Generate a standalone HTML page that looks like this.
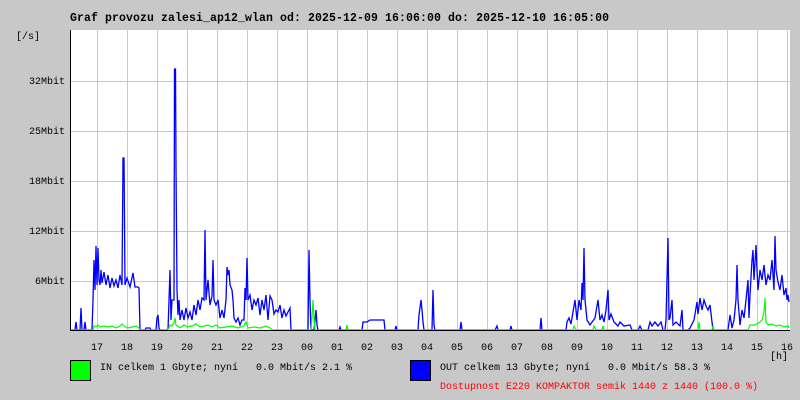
<!DOCTYPE html>
<html><head><meta charset="utf-8"><style>
body{margin:0;width:800px;height:400px;background:#c8c8c8;overflow:hidden;position:relative;font-family:"Liberation Mono",monospace;font-size:10px;color:#000}
.t{position:absolute;white-space:pre;line-height:12px}
.b{font-weight:bold;font-size:11.5px;letter-spacing:0.1px}
.y{position:absolute;right:735px;white-space:pre;line-height:12px}
.h{position:absolute;top:343px;width:30px;margin-left:-15px;text-align:center;line-height:12px}
</style></head><body>
<div class="t b" style="left:70px;top:13px">Graf provozu zalesi_ap12_wlan od: 2025-12-09 16:06:00 do: 2025-12-10 16:05:00</div>
<div class="t" style="left:16px;top:32px">[/s]</div>
<div class="y" style="top:77px">32Mbit</div>
<div class="y" style="top:127px">25Mbit</div>
<div class="y" style="top:177px">18Mbit</div>
<div class="y" style="top:227px">12Mbit</div>
<div class="y" style="top:277px">6Mbit</div>
<svg style="position:absolute;left:0;top:0" width="800" height="400">
<rect x="70" y="30" width="720" height="300" fill="#fff"/>
<g stroke="#c8c8c8" stroke-width="1">
<path d="M97.5 30V330M127.5 30V330M157.5 30V330M187.5 30V330M217.5 30V330M247.5 30V330M277.5 30V330M307.5 30V330M337.5 30V330M367.5 30V330M397.5 30V330M427.5 30V330M457.5 30V330M487.5 30V330M517.5 30V330M547.5 30V330M577.5 30V330M607.5 30V330M637.5 30V330M667.5 30V330M697.5 30V330M727.5 30V330M757.5 30V330M787.5 30V330"/>
<path d="M70 81.5H790M70 131.5H790M70 181.5H790M70 231.5H790M70 281.5H790"/>
</g>
<polyline fill="none" stroke="#00f" stroke-width="1.3" points="71,330 75,330 76,322 77,330 80,330 81,308 82,330 84,330 85,322 86,330 92,330 93,300 94,260 95,290 96,246 97,285 98,248 99,280 100,285 101,270 102,283 104,272 106,285 108,275 110,288 112,278 114,286 116,280 118,288 120,275 122,285 123,158 124,158 125,285 127,278 130,287 133,273 135,287 138,287 139,288 140,330 145,330 146,328 150,328 151,330 156,330 157,318 158,315 159,328 160,330 168,330 169,300 170,270 171,320 172,300 174,300 174.5,69 175.5,69 176,168 177,290 178,315 179,300 180,320 182,310 184,320 186,308 188,318 190,312 192,320 194,305 196,315 198,300 200,310 202,298 204,300 205,230 206,300 208,280 210,305 212,296 213,260 214,300 216,305 218,300 220,318 222,310 224,318 226,300 227,267 228,275 229,270 230,285 232,290 233,300 234,318 236,322 238,318 240,325 242,320 244,320 245,288 246,300 247,258 248,300 250,295 252,310 254,300 256,305 258,298 260,315 262,300 264,310 266,295 268,320 270,296 272,300 274,314 276,310 278,312 280,305 282,318 284,310 286,316 288,312 290,308 291,330 300,330 308,330 309,250 310,300 311,330 314,330 315,320 316,310 317,325 318,330 330,330 339,330 340,327 341,330 362,330 363,322 367,322 370,320 380,320 384,320 385,330 395,330 396,326 397,330 418,330 419,315 421,300 422,310 423,322 424,330 432,330 433,290 434,325 435,330 460,330 461,322 462,330 495,330 497,326 498,330 510,330 511,326 512,330 540,330 541,318 542,330 566,330 567,322 569,318 571,324 573,312 575,300 577,320 579,300 581,310 582,283 583,300 584,248 585,300 587,320 590,325 595,318 598,300 600,320 602,315 604,322 606,310 608,290 609,320 611,314 614,322 616,324 618,326 620,322 624,326 630,325 632,330 638,330 640,326 642,330 648,330 650,322 652,326 655,322 658,326 661,322 663,330 665,330 666,320 668,238 669,320 670,318 672,300 673,325 676,322 680,326 682,310 683,330 688,330 690,328 694,320 697,302 698,314 700,298 702,310 704,300 706,306 708,310 710,305 712,322 713,330 720,330 728,330 730,315 732,328 734,320 736,300 737,265 738,300 740,325 742,310 744,318 746,300 748,280 749,318 750,295 752,260 753,250 754,280 756,245 757,270 758,290 760,270 762,280 764,265 766,285 768,275 770,280 772,260 774,290 775,236 776,270 778,282 780,290 782,275 784,295 786,288 787,300 788,295 789,302"/>
<polyline fill="none" stroke="#0f0" stroke-width="1.2" points="71,330 93,330 94,326 96,327 98,325 100,327 104,326 108,327 112,326 116,328 120,326 122,324 124,326 128,328 132,327 136,326 139,328 140,330 168,330 170,325 172,326 174,323 175,318 176,325 178,326 180,328 184,325 188,327 192,326 196,324 200,327 204,326 208,325 212,327 216,325 220,328 226,327 232,326 238,328 244,326 246,322 248,328 254,327 260,328 266,326 270,328 272,330 311,330 312,318 313,300 314,318 315,330 346,330 347,325 348,330 573,330 574,326 576,330 593,330 594,326 596,330 602,330 603,326 604,330 698,330 699,322 700,330 712,330 713,326 714,330 748,330 750,325 755,325 760,322 762,320 764,312 765,298 766,322 768,325 772,324 776,326 780,325 784,327 788,326 789,328"/>
<path d="M70.5 30V331" stroke="#000" stroke-width="1"/>
<path d="M70 330.5H790" stroke="#000" stroke-width="1"/>
<rect x="70.5" y="360.5" width="20" height="20" fill="#0f0" stroke="#000"/>
<rect x="410.5" y="360.5" width="20" height="20" fill="#00f" stroke="#000"/>
</svg>
<div class="h" style="left:97px">17</div><div class="h" style="left:127px">18</div><div class="h" style="left:157px">19</div><div class="h" style="left:187px">20</div><div class="h" style="left:217px">21</div><div class="h" style="left:247px">22</div><div class="h" style="left:277px">23</div><div class="h" style="left:307px">00</div><div class="h" style="left:337px">01</div><div class="h" style="left:367px">02</div><div class="h" style="left:397px">03</div><div class="h" style="left:427px">04</div><div class="h" style="left:457px">05</div><div class="h" style="left:487px">06</div><div class="h" style="left:517px">07</div><div class="h" style="left:547px">08</div><div class="h" style="left:577px">09</div><div class="h" style="left:607px">10</div><div class="h" style="left:637px">11</div><div class="h" style="left:667px">12</div><div class="h" style="left:697px">13</div><div class="h" style="left:727px">14</div><div class="h" style="left:757px">15</div><div class="h" style="left:787px">16</div>
<div class="t" style="left:770px;top:352px">[h]</div>
<div class="t" style="left:100px;top:363px">IN celkem 1 Gbyte; nyní   0.0 Mbit/s 2.1 %</div>
<div class="t" style="left:440px;top:363px">OUT celkem 13 Gbyte; nyní   0.0 Mbit/s 58.3 %</div>
<div class="t" style="left:440px;top:382px;color:#f00">Dostupnost E220 KOMPAKTOR semik 1440 z 1440 (100.0 %)</div>
</body></html>
